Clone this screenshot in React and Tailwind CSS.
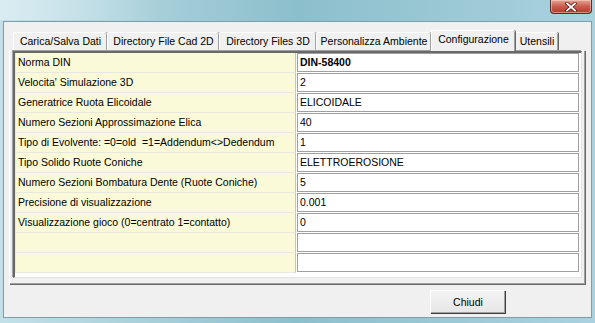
import React from 'react';

// righe della griglia di configurazione
const rows = [
  { label: 'Norma DIN', value: 'DIN-58400', bold: true },
  { label: "Velocita' Simulazione 3D", value: '2' },
  { label: 'Generatrice Ruota Elicoidale', value: 'ELICOIDALE' },
  { label: 'Numero Sezioni Approssimazione Elica', value: '40' },
  { label: 'Tipo di Evolvente: =0=old  =1=Addendum<>Dedendum', value: '1' },
  { label: 'Tipo Solido Ruote Coniche', value: 'ELETTROEROSIONE' },
  { label: 'Numero Sezioni Bombatura Dente (Ruote Coniche)', value: '5' },
  { label: 'Precisione di visualizzazione', value: '0.001' },
  { label: 'Visualizzazione gioco (0=centrato 1=contatto)', value: '0' },
  { label: '', value: '' },
  { label: '', value: '' },
];

const tabs = [
  { label: 'Carica/Salva Dati', w: 'w-[94px]' },
  { label: 'Directory File Cad 2D', w: 'w-[112px]' },
  { label: 'Directory Files 3D', w: 'w-[97px]' },
  { label: 'Personalizza Ambiente', w: 'w-[115px]' },
  { label: 'Configurazione', w: 'w-[84px]', active: true },
  { label: 'Utensili', w: 'w-[43px]' },
];

function CloseButton() {
  return (
    <div className="absolute right-[3px] top-0 w-[42px] h-[14px] rounded-b-[4px] border border-t-0 border-[#5a2a26] bg-gradient-to-b from-[#e4a596] via-[#c85d4c] to-[#b33b2a] shadow-[inset_0_0_0_1px_rgba(255,220,210,0.5)] flex items-center justify-center">
      <svg width="14" height="10" viewBox="0 0 14 10">
        <path d="M3 1.5 L11 8.5 M11 1.5 L3 8.5" stroke="#5b2019" strokeWidth="3.4" strokeLinecap="square" />
        <path d="M3 1.5 L11 8.5 M11 1.5 L3 8.5" stroke="#ffffff" strokeWidth="1.8" strokeLinecap="square" />
      </svg>
    </div>
  );
}

function Tab({ label, w, active }) {
  if (active) {
    return (
      <div className={`${w} h-[21px] -mb-px relative z-10 bg-[#f0f0f0] border-t border-l border-white rounded-t-[2px] shadow-[inset_-1px_0_0_#a0a0a0,1px_0_0_#696969] flex items-start justify-center pt-[3px] text-black`}>
        {label}
      </div>
    );
  }
  return (
    <div className={`${w} h-[18px] bg-[#f0f0f0] border-t border-l border-white rounded-t-[2px] shadow-[inset_-1px_0_0_#a0a0a0,1px_0_0_#696969] flex items-center justify-center text-black`}>
      {label}
    </div>
  );
}

export default function App() {
  return (
    <div className="w-[595px] h-[323px] overflow-hidden relative bg-gradient-to-r from-[#c3e0e8] via-[#8cbfcc] to-[#a9d2de] font-['Liberation_Sans',Arial,sans-serif] text-[10.5px] leading-none select-none">
      {/* riflesso vetro */}
      <div className="absolute left-0 top-0 w-[160px] h-[20px] bg-gradient-to-r from-[#e3f1f5] to-transparent opacity-70" />
      <CloseButton />

      {/* area client */}
      <div className="absolute left-[3px] top-[21px] w-[589px] h-[297px] bg-[#f0f0f0] border border-[#7d9ea9]">
        {/* tab */}
        <div className="flex items-end ml-[9px] mt-[8px] h-[20px]">
          {tabs.map((t) => (
            <Tab key={t.label} {...t} />
          ))}
        </div>

        {/* pannello */}
        <div className="ml-[5px] w-[576px] h-[234px] bg-[#f0f0f0] border-t border-l border-white shadow-[inset_-1px_-1px_0_#a0a0a0,1px_1px_0_#696969]">
          <div className="ml-[3px] w-[569px] h-[227px] bg-white border-t-2 border-l-2 border-t-[#696969] border-l-[#696969] border-r border-b border-r-[#e3e3e3] border-b-[#e3e3e3] shadow-[-1px_-1px_0_#a0a0a0]">
            {rows.map((r, i) => (
              <div key={i} className="flex h-[20px]">
                <div className="w-[281px] h-[20px] bg-[#fafad8] border-l border-b border-[#e8e8e0] border-r border-r-[#c4c4c4] pl-[2px] flex items-center text-black whitespace-pre">
                  {r.label}
                </div>
                <div className={`ml-px w-[282px] h-[19px] bg-white border border-[#a0a0a0] pl-[2px] flex items-center text-black ${r.bold ? 'font-bold' : ''}`}>
                  {r.value}
                </div>
              </div>
            ))}
          </div>
        </div>

        {/* pulsante */}
        <div className="ml-[426px] mt-[6px] w-[75px] h-[23px] bg-gradient-to-b from-[#f4f4f4] to-[#e6e6e6] border-t border-l border-white shadow-[inset_-1px_-1px_0_#a0a0a0,1px_1px_0_#404040] flex items-center justify-center text-black">
          Chiudi
        </div>
      </div>
    </div>
  );
}
